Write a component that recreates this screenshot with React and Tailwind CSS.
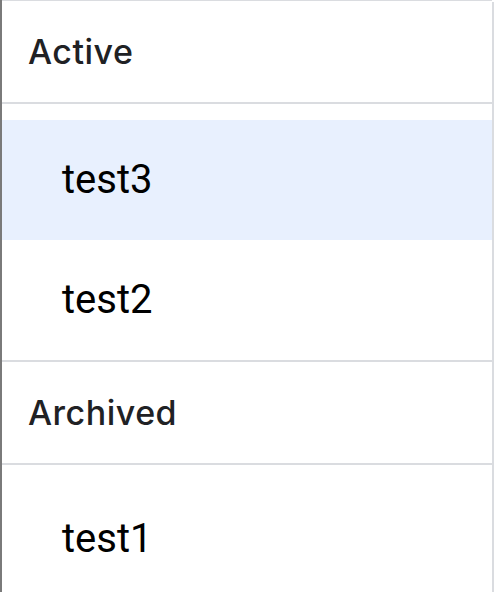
import React from 'react';

const Header = ({ label, h }) => (
    <div className={`${h} flex items-center pl-[26px] text-[34px] font-medium text-[#202124] tracking-[0.5px]`} style={{ fontFamily: 'Inter, sans-serif' }}>
        {label}
    </div>
);

const Item = ({ label, selected }) => (
    <div className={`h-[120px] flex items-center pl-[60px] text-[40px] text-black ${selected ? 'bg-[#e8f0fe]' : ''}`} style={{ fontFamily: 'Roboto, sans-serif' }}>
        {label}
    </div>
);

export default function App() {
    return (
        <div className="w-[498px] h-[592px] overflow-hidden bg-white flex border-l-2 border-[#7a7a7a]">
            <div className="w-[490px] flex flex-col border-t border-[#dadce0]">
                <Header label="Active" h="h-[101px] shrink-0" />
                <div className="h-[2px] shrink-0 bg-[#dadce0]" />
                <div className="pt-[16px]">
                    <Item label="test3" selected />
                    <Item label="test2" />
                </div>
                <div className="h-[2px] shrink-0 bg-[#dadce0]" />
                <Header label="Archived" h="h-[101px] shrink-0" />
                <div className="h-[2px] shrink-0 bg-[#dadce0]" />
                <div className="pt-[14px]">
                    <Item label="test1" />
                </div>
            </div>
            <div className="w-[2px] bg-[#dadce0] mt-[2px]" />
        </div>
    );
}
